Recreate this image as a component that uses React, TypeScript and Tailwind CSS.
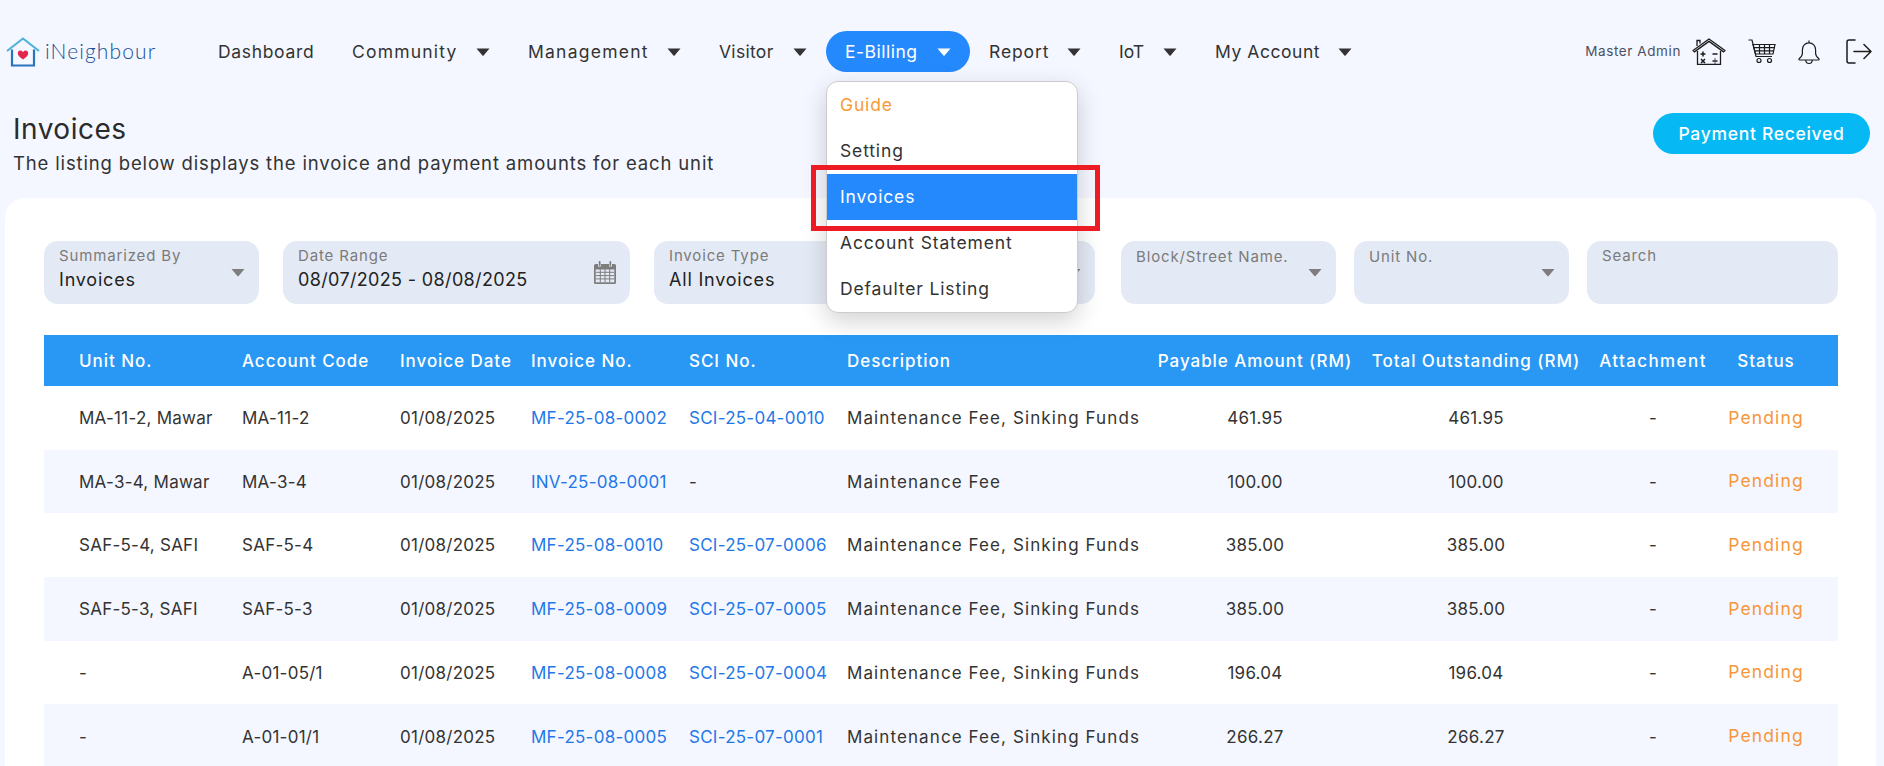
const navItems = [
  { label: "Dashboard", caret: false, text: "w-[96px] tracking-[0.67px]" },
  { label: "Community", caret: true, text: "w-[105px] tracking-[1.2px]" },
  { label: "Management", caret: true, text: "w-[120px] tracking-[1.24px]" },
  { label: "Visitor", caret: true, text: "w-[55px] tracking-[0.3px]" },
  { label: "E-Billing", caret: true, active: true, text: "w-[73px] tracking-[0.5px]" },
  { label: "Report", caret: true, text: "w-[59px] tracking-[0.87px]" },
  { label: "IoT", caret: true, text: "w-[25px] tracking-[0px]" },
  { label: "My Account", caret: true, text: "w-[104px] tracking-[0.54px]" },
]

const menuItems = ["Guide", "Setting", "Invoices", "Account Statement", "Defaulter Listing"]

const longDesc = "Maintenance Fee, Sinking Funds"

const rows = [
  ["MA-11-2, Mawar", "MA-11-2", "MF-25-08-0002", "SCI-25-04-0010", longDesc, "461.95"],
  ["MA-3-4, Mawar", "MA-3-4", "INV-25-08-0001", "-", "Maintenance Fee", "100.00"],
  ["SAF-5-4, SAFI", "SAF-5-4", "MF-25-08-0010", "SCI-25-07-0006", longDesc, "385.00"],
  ["SAF-5-3, SAFI", "SAF-5-3", "MF-25-08-0009", "SCI-25-07-0005", longDesc, "385.00"],
  ["-", "A-01-05/1", "MF-25-08-0008", "SCI-25-07-0004", longDesc, "196.04"],
  ["-", "A-01-01/1", "MF-25-08-0005", "SCI-25-07-0001", longDesc, "266.27"],
]

function Caret({ className }: { className: string }) {
  return (
    <svg viewBox="0 0 14 8" className={className}>
      <path d="M0.5 0.5h13L7.6 7.4a.8.8 0 0 1-1.2 0z" fill="currentColor" />
    </svg>
  )
}

function Logo() {
  return (
    <div className="flex items-center w-[199px] pl-[6px] shrink-0">
      <svg viewBox="0 0 34 30" className="w-[34px] h-[30px] shrink-0">
        <path d="M1 14 17 1.5 33 14" fill="none" stroke="#4fb3da" strokeWidth="2.2" strokeLinejoin="round" />
        <path d="M6 12.5V28.5H28V12.5" fill="none" stroke="#2a74bd" strokeWidth="2.2" />
        <path d="M17 22.5c-3.5-2.6-5.2-4.2-5.2-6.2 0-1.6 1.2-2.7 2.6-2.7 1.1 0 2 .6 2.6 1.6.6-1 1.5-1.6 2.6-1.6 1.4 0 2.6 1.1 2.6 2.7 0 2-1.7 3.6-5.2 6.2z" fill="#e5254b" />
      </svg>
      <span className="ml-[5px] -mt-[2px] text-[21px] font-light tracking-[1.1px] text-[#174f96] [font-family:Lato,sans-serif]">iNeighbour</span>
    </div>
  )
}

function HouseCalcIcon() {
  return (
    <svg viewBox="0 0 34 27" className="w-[34px] h-[27px]" fill="none" stroke="#1c1c1c" strokeWidth="1.3">
      <path d="M5 8V2.5h3V5.5" />
      <path d="M1 12.5 17 1l16 11.5-1.4 1.4L17 3.4 2.4 13.9z" strokeLinejoin="round" />
      <path d="M5.500 13V26.300H28.500V13" />
      <path d="M11 13.500v5M8.500 16h5M20.500 16h5M9 21l4 4M13 21l-4 4M20.500 23h5" strokeWidth="1.500" />
      <circle cx="23" cy="21" r=".7" fill="#1c1c1c" stroke="none" />
      <circle cx="23" cy="25" r=".7" fill="#1c1c1c" stroke="none" />
    </svg>
  )
}

function CartIcon() {
  return (
    <svg viewBox="0 0 28 25" className="w-[28px] h-[25px]" fill="none" stroke="#1c1c1c" strokeWidth="1.2">
      <path d="M0.500 1h3.500l4 16.500h16" />
      <path d="M5 5.500h22l-2 9.500H7.500z" />
      <path d="M5.800 8.700h20.500M6.500 11.800h19.200M11.500 5.500v9.500M16.500 5.500v9.500M21.500 5.500v9.500" />
      <circle cx="11" cy="21.500" r="2" />
      <circle cx="21.500" cy="21.500" r="2" />
    </svg>
  )
}

function BellIcon() {
  return (
    <svg viewBox="0 0 22 26" className="w-[22px] h-[26px]" fill="none" stroke="#1c1c1c" strokeWidth="1.2" strokeLinejoin="round">
      <path d="M11 1.500v2.300" />
      <path d="M11 3.800c-3.900 0-6.600 3-6.600 7v3.700c0 2-1.300 3.500-3.300 5.300-.5.500-.2 1.200.5 1.200h18.800c.7 0 1-.7.500-1.200-2-1.800-3.300-3.300-3.300-5.300v-3.700c0-4-2.700-7-6.600-7z" />
      <path d="M7.800 21c0 2 .8 3.500 3.200 3.500s3.200-1.500 3.200-3.500" />
    </svg>
  )
}

function LogoutIcon() {
  return (
    <svg viewBox="0 0 26 25" className="w-[26px] h-[25px]" fill="none" stroke="#1c1c1c" strokeWidth="1.5" strokeLinecap="round" strokeLinejoin="round">
      <path d="M9 1H3a2 2 0 0 0-2 2v19a2 2 0 0 0 2 2h6" />
      <path d="M8 12.500h17M18 5.500l7 7-7 7" />
    </svg>
  )
}

function CalendarIcon() {
  return (
    <svg viewBox="0 0 22 23" className="w-[22px] h-[23px] shrink-0" fill="#7d7d7d">
      <path d="M1.500 3H4V5.500H7V3h8v2.500h3V3h2.500A1.500 1.500 0 0 1 22 4.500v17a1.500 1.500 0 0 1-1.500 1.500h-19A1.500 1.500 0 0 1 0 21.500v-17A1.500 1.500 0 0 1 1.500 3z" />
      <rect x="4.800" y="0" width="1.700" height="5" rx=".8" />
      <rect x="15.500" y="0" width="1.700" height="5" rx=".8" />
      <path d="M1.700 8h18.600v13.300H1.700z" fill="#e4eaf5" />
      <path d="M1.700 8h18.600M1.700 11.300h18.600M1.700 14.600h18.600M1.700 17.900h18.600M6.300 8v13.300M11 8v13.300M15.700 8v13.300" stroke="#7d7d7d" strokeWidth="1" fill="none" />
    </svg>
  )
}

function FilterBox({ label, value, width, caret = true, low = false, valueText = "tracking-[0.8px]", children }: { label: string; value?: string; width: string; caret?: boolean; low?: boolean; valueText?: string; children?: React.ReactNode }) {
  return (
    <div className={`${width} h-[63px] shrink-0 rounded-[14px] bg-[#e4eaf5] pl-[15px] pr-[14px] flex items-center justify-between`}>
      <div className="self-start">
        <div className={`${low ? "mt-[6px]" : "mt-[5px]"} text-[15px] leading-[20px] text-[#7b7b7b] tracking-[0.85px] whitespace-nowrap`}>{label}</div>
        {value && <div className={`mt-[2px] text-[18px] leading-[24px] text-[#222] whitespace-nowrap ${valueText}`}>{value}</div>}
      </div>
      {children}
      {caret && <Caret className="w-[14px] h-[9px] text-[#7d7d7d] shrink-0" />}
    </div>
  )
}

export default function App() {
  return (
    <div className="h-[766px] overflow-hidden bg-[#f4f7ff] [font-family:Inter,sans-serif] text-[#333]">
      {/* Top nav */}
      <header className="h-[103px] flex items-center">
        <Logo />
        <nav className="flex items-center">
          {navItems.map((item) => (
            <div key={item.label} className="relative">
              <a className={`flex items-center gap-[19px] h-[41px] px-[19px] rounded-full text-[17.500px] whitespace-nowrap ${item.active ? "bg-[#2589fe] text-white" : "text-[#333]"}`}>
                <span className={`mt-[2px] ${item.text}`}>{item.label}</span>
                {item.caret && <Caret className={`w-[14px] h-[8px] ${item.active ? "text-white" : "text-[#333]"}`} />}
              </a>
              {item.active && (
                <div className="absolute z-20 left-0 top-[50px] w-[252px] rounded-[12px] border border-[#ccc] bg-white shadow-[0_8px_24px_rgba(0,0,0,0.18)]">
                  {menuItems.map((m) => (
                    <div key={m} className={`h-[46px] flex items-center pl-[13px] text-[17.500px] tracking-[0.85px] ${m === "Guide" ? "text-[#f79a35]" : m === "Invoices" ? "bg-[#2589fe] text-white" : "text-[#333]"}`}>
                      {m}
                    </div>
                  ))}
                  <div className="absolute -left-[16px] top-[83px] w-[289px] h-[66px] border-[5px] border-[#ed1c24]" />
                </div>
              )}
            </div>
          ))}
        </nav>
        <div className="ml-auto flex items-center">
          <span className="text-[13.500px] tracking-[0.6px] text-[#4a5160] mr-[11px]">Master Admin</span>
          <HouseCalcIcon />
          <span className="ml-[22px]"><CartIcon /></span>
          <span className="ml-[22px]"><BellIcon /></span>
          <span className="ml-[26px] mr-[12px]"><LogoutIcon /></span>
        </div>
      </header>

      {/* Title */}
      <div className="h-[95px] flex justify-between pl-[13px] pr-[14px]">
        <div>
          <h1 className="text-[28px] leading-[34px] mt-[9px] tracking-[0.5px] text-[#2b2b2b]">Invoices</h1>
          <p className="text-[18.500px] leading-[24px] tracking-[0.85px] text-[#333] mt-[5px]">The listing below displays the invoice and payment amounts for each unit</p>
        </div>
        <button className="mt-[10px] h-[41px] w-[217px] pt-[2px] rounded-full bg-[#06b9f4] text-white text-[17.500px] font-medium tracking-[0.7px]">Payment Received</button>
      </div>

      {/* Panel */}
      <main className="ml-[5px] mr-[8px] rounded-t-[20px] bg-white pt-[43px] pl-[39px] pr-[38px]">
        <div className="flex">
          <FilterBox label="Summarized By" value="Invoices" width="w-[215px]" />
          <div className="ml-[24px]">
            <FilterBox label="Date Range" value="08/07/2025 - 08/08/2025" valueText="tracking-[0.35px]" width="w-[347px]" caret={false}>
              <CalendarIcon />
            </FilterBox>
          </div>
          <div className="ml-[24px]">
            <FilterBox label="Invoice Type" value="All Invoices" width="w-[441px]" />
          </div>
          <div className="ml-[26px]">
            <FilterBox label="Block/Street Name." width="w-[215px]" low />
          </div>
          <div className="ml-[18px]">
            <FilterBox label="Unit No." width="w-[215px]" low />
          </div>
          <div className="ml-[18px]">
            <FilterBox label="Search" width="w-[251px]" caret={false} />
          </div>
        </div>

        <table className="mt-[31px] w-[1794px] table-fixed border-collapse text-[17px] tracking-[0.25px]">
          <colgroup>
            <col className="w-[198px]" />
            <col className="w-[158px]" />
            <col className="w-[131px]" />
            <col className="w-[158px]" />
            <col className="w-[158px]" />
            <col className="w-[285px]" />
            <col className="w-[246px]" />
            <col className="w-[196px]" />
            <col className="w-[158px]" />
            <col className="w-[106px]" />
          </colgroup>
          <thead>
            <tr className="h-[51px] bg-[#2998f5] text-white text-left tracking-[0.95px]">
              <th className="pl-[35px] pt-[2px] font-medium">Unit No.</th>
              <th className="pt-[2px] font-medium">Account Code</th>
              <th className="pt-[2px] font-medium">Invoice Date</th>
              <th className="pt-[2px] font-medium">Invoice No.</th>
              <th className="pt-[2px] font-medium">SCI No.</th>
              <th className="pt-[2px] font-medium">Description</th>
              <th className="pt-[2px] font-medium whitespace-nowrap"><div className="flex justify-center">Payable Amount (RM)</div></th>
              <th className="pt-[2px] font-medium whitespace-nowrap"><div className="flex justify-center">Total Outstanding (RM)</div></th>
              <th className="pt-[2px] font-medium text-center tracking-[1.4px]">Attachment</th>
              <th className="pt-[2px] font-medium text-center pr-[38px]">Status</th>
            </tr>
          </thead>
          <tbody>
            {rows.map((r, i) => (
              <tr key={r[2]} className={`h-[63.700px] whitespace-nowrap ${i % 2 === 1 ? "bg-[#f4f7ff]" : "bg-white"}`}>
                <td className="pl-[35px] pt-[2px]">{r[0]}</td>
                <td className="pt-[2px]">{r[1]}</td>
                <td className="pt-[2px]">01/08/2025</td>
                <td className="pt-[2px] text-[#1f78e8]">{r[2]}</td>
                <td className={`pt-[2px] ${r[3] === "-" ? "" : "text-[#1f78e8]"}`}>{r[3]}</td>
                <td className="pt-[2px] tracking-[1.1px]">{r[4]}</td>
                <td className="pt-[2px] text-center">{r[5]}</td>
                <td className="pt-[2px] text-center">{r[5]}</td>
                <td className="pt-[2px] text-center">-</td>
                <td className="pr-[38px] text-[17.500px] tracking-[1.15px] text-[#f7963a]"><div className="flex justify-center">Pending</div></td>
              </tr>
            ))}
          </tbody>
        </table>
      </main>
    </div>
  )
}
